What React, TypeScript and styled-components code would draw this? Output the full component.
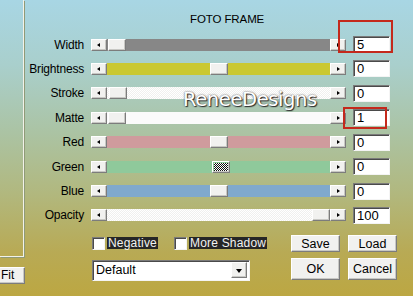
import React from 'react';
import styled, { createGlobalStyle, css } from 'styled-components';

const GlobalStyle = createGlobalStyle`
  html, body {
    margin: 0;
    padding: 0;
  }
  body {
    font-family: "Liberation Sans", Arial, sans-serif;
    font-size: 11px;
  }
`;

type SliderDef = {
  label: string;
  value: string;
  track: string;
  thumb: number;
  dither?: boolean;
  focused?: boolean;
};

const sliders: SliderDef[] = [
  { label: 'Width', value: '5', track: '#878787', thumb: 1 },
  { label: 'Brightness', value: '0', track: '#cac832', thumb: 103 },
  { label: 'Stroke', value: '0', track: '#f6f6f4', thumb: 2, dither: true },
  { label: 'Matte', value: '1', track: '#fbfbfb', thumb: 1 },
  { label: 'Red', value: '0', track: '#cf9b9d', thumb: 103 },
  { label: 'Green', value: '0', track: '#8fc99b', thumb: 105, focused: true },
  { label: 'Blue', value: '0', track: '#80a9cd', thumb: 103 },
  { label: 'Opacity', value: '100', track: '#f8f8f8', thumb: 205, dither: true },
];

const raised = css`
  background: #f1f1ef;
  border: 1px solid;
  border-color: #ffffff #7c7c7c #7c7c7c #ffffff;
  box-shadow: inset -1px -1px 0 #c8c8c4;
  box-sizing: border-box;
`;

const sunken = css`
  background: #ffffff;
  border: 1px solid;
  border-color: #7a7a7a #f4f4f4 #f4f4f4 #7a7a7a;
  box-shadow: inset 1px 1px 0 #4a4a4a;
  box-sizing: border-box;
`;

const App = () => {
  return (
    <Dialog>
      <GlobalStyle />
      <LeftCol>
        <Preview />
        <FitButton>Fit</FitButton>
      </LeftCol>
      <Main>
        <Title>FOTO FRAME</Title>
        <Rows>
          {sliders.map((s) => (
            <Row key={s.label}>
              <Label>{s.label}</Label>
              <Slider>
                <ArrowButton $dir="left" />
                <Track $color={s.track} $dither={s.dither}>
                  <Thumb $focused={s.focused} style={{ left: s.thumb }} />
                </Track>
                <ArrowButton $dir="right" />
              </Slider>
              <ValueBox>{s.value}</ValueBox>
            </Row>
          ))}
        </Rows>
        <Bottom>
          <Checks>
            <CheckBox />
            <CheckLabel>Negative</CheckLabel>
            <CheckBox $gap />
            <CheckLabel>More Shadow</CheckLabel>
          </Checks>
          <Button>Save</Button>
          <Button>Load</Button>
          <Select>
            <span>Default</span>
            <SelectArrow />
          </Select>
          <Button $tall>OK</Button>
          <Button $tall>Cancel</Button>
        </Bottom>
      </Main>
      <Watermark>ReneeDesigns</Watermark>
      <Highlight $x={338} $y={20} $w={55} $h={33} />
      <Highlight $x={343} $y={107} $w={44} $h={22} />
    </Dialog>
  );
};

const Dialog = styled.div`
  position: relative;
  width: 413px;
  height: 296px;
  overflow: hidden;
  display: flex;
  background: linear-gradient(
    180deg,
    #a8d6e4 0%,
    #a9cfcc 22%,
    #abc3a3 45%,
    #b1b87f 65%,
    #b8aa55 85%,
    #bca742 100%
  );
  color: #000;
`;

const LeftCol = styled.div`
  width: 26px;
  display: flex;
  flex-direction: column;
`;

const Preview = styled.div`
  width: 23px;
  height: 256px;
  border-right: 1px solid #f2f2ea;
  border-bottom: 1px solid #f2f2ea;
  box-shadow: 1px 1px 0 #8f9a78;
`;

const FitButton = styled.div`
  ${raised};
  margin-top: 10px;
  width: 25px;
  height: 17px;
  border-left: none;
  padding-left: 1px;
  font-size: 12px;
  line-height: 15px;
`;

const Main = styled.div`
  flex: 1;
  display: flex;
  flex-direction: column;
  padding-top: 13px;
`;

const Title = styled.div`
  height: 13px;
  line-height: 13px;
  font-size: 11.5px;
  padding-left: 164px;
  letter-spacing: -0.1px;
`;

const Rows = styled.div`
  margin-top: 10px;
  display: grid;
  grid-auto-rows: 17px;
  row-gap: 7.43px;
`;

const Row = styled.div`
  display: grid;
  grid-template-columns: 58px 255px 37px;
  column-gap: 7px;
  align-items: center;
`;

const Label = styled.div`
  text-align: right;
  font-size: 12px;
  line-height: 14px;
  letter-spacing: -0.2px;
`;

const Slider = styled.div`
  display: flex;
  height: 12px;
`;

const ArrowButton = styled.div<{ $dir: 'left' | 'right' }>`
  ${raised};
  width: 16px;
  height: 12px;
  position: relative;
  &::after {
    content: '';
    position: absolute;
    top: 3px;
    left: ${(p) => (p.$dir === 'left' ? '5px' : '6px')};
    border-top: 2.5px solid transparent;
    border-bottom: 2.5px solid transparent;
    ${(p) =>
      p.$dir === 'left'
        ? 'border-right: 3px solid #000;'
        : 'border-left: 3px solid #000;'}
  }
`;

const Track = styled.div<{ $color: string; $dither?: boolean }>`
  position: relative;
  flex: 1;
  background-color: ${(p) => p.$color};
  ${(p) =>
    p.$dither &&
    css`
      background-image: repeating-conic-gradient(#f0f0ee 0 25%, #ffffff 0 50%);
      background-size: 2px 2px;
    `}
`;

const Thumb = styled.div<{ $focused?: boolean }>`
  ${raised};
  position: absolute;
  top: 0;
  width: 18px;
  height: 12px;
  ${(p) =>
    p.$focused &&
    css`
      background-image: repeating-conic-gradient(#111 0 25%, #fff 0 50%);
      background-size: 2px 2px;
      background-position: 1px 1px;
      background-clip: content-box;
      padding: 1px;
    `}
`;

const ValueBox = styled.div`
  ${sunken};
  height: 17px;
  padding-left: 3px;
  font-size: 13px;
  line-height: 15px;
`;

const Bottom = styled.div`
  margin-top: 11px;
  padding-left: 66px;
  display: grid;
  grid-template-columns: 191px 49px 49px;
  grid-template-rows: 17px 23px;
  column-gap: 8px;
  row-gap: 6px;
`;

const Checks = styled.div`
  display: flex;
  align-items: center;
`;

const CheckBox = styled.div<{ $gap?: boolean }>`
  ${sunken};
  width: 13px;
  height: 13px;
  margin-left: ${(p) => (p.$gap ? '16px' : '0')};
  margin-right: 2px;
`;

const CheckLabel = styled.div`
  background: #262626;
  color: #f2f2f2;
  font-size: 12px;
  line-height: 12px;
  height: 12px;
  padding: 0 1px 0 1px;
  letter-spacing: 0.2px;
`;

const Button = styled.div<{ $tall?: boolean }>`
  ${raised};
  height: ${(p) => (p.$tall ? '22px' : '17px')};
  display: flex;
  align-items: center;
  justify-content: center;
  font-size: 12.5px;
  padding-top: 1px;
`;

const Select = styled.div`
  ${sunken};
  align-self: end;
  width: 158px;
  height: 21px;
  display: flex;
  align-items: center;
  justify-content: space-between;
  padding: 0 2px 0 3px;
  font-size: 12.5px;
`;

const SelectArrow = styled.div`
  ${raised};
  width: 16px;
  height: 16px;
  position: relative;
  &::after {
    content: '';
    position: absolute;
    top: 6px;
    left: 4px;
    border-left: 3.5px solid transparent;
    border-right: 3.5px solid transparent;
    border-top: 4px solid #000;
  }
`;

const Watermark = styled.div`
  position: absolute;
  left: 183px;
  top: 88px;
  font-family: "DejaVu Sans", Verdana, sans-serif;
  font-size: 19.5px;
  letter-spacing: -0.4px;
  color: #ffffff;
  text-shadow: 1px 1px 1px #2a2a2a, 0 0 2px #444;
  pointer-events: none;
`;

const Highlight = styled.div<{ $x: number; $y: number; $w: number; $h: number }>`
  position: absolute;
  left: ${(p) => p.$x}px;
  top: ${(p) => p.$y}px;
  width: ${(p) => p.$w}px;
  height: ${(p) => p.$h}px;
  border: 2px solid #c4291c;
  box-sizing: border-box;
  pointer-events: none;
`;

export default App;
